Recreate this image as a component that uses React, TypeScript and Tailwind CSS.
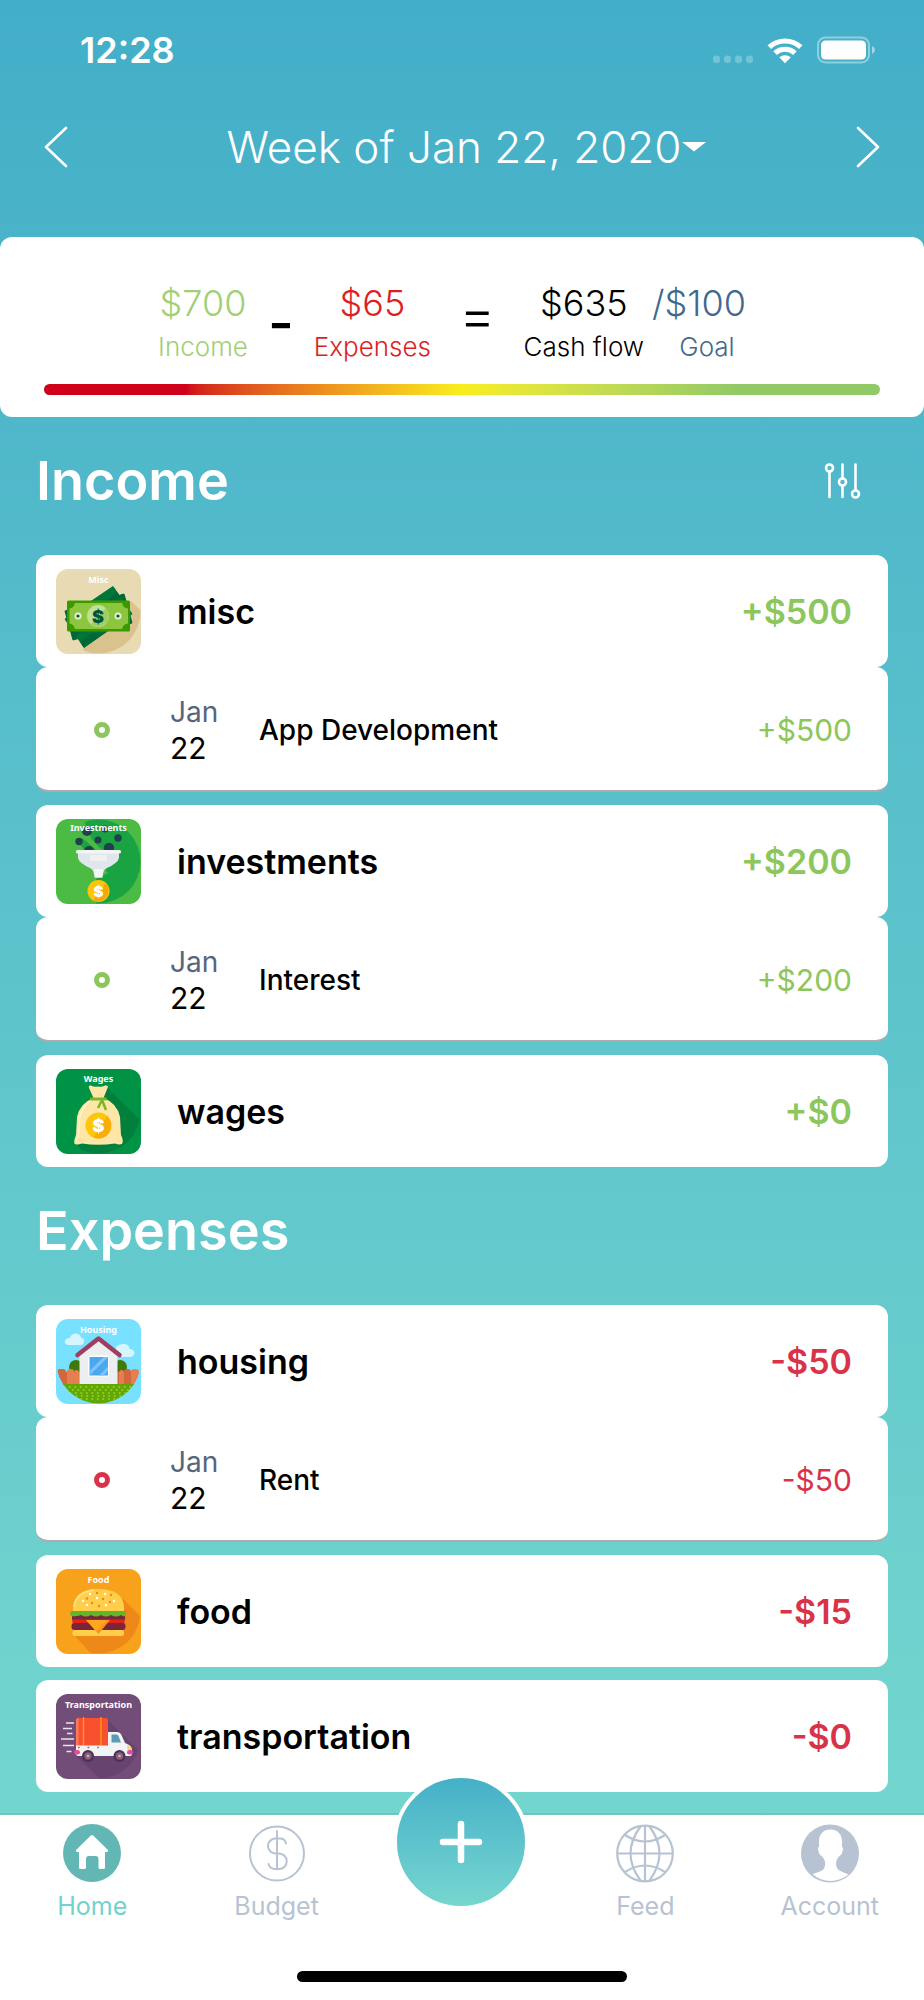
import React, { useState } from 'react';

type Entry = { id: number; month: string; day: string; title: string; amount: string };
type Category = { name: string; total: string; Icon: () => React.JSX.Element; entries: Entry[] };

const Tile = ({ label, bg, shadow, children }: {
  label: string;
  bg: string;
  shadow?: string;
  children: React.ReactNode;
}) => (
  <svg viewBox="0 0 85 85" className="size-[85px] shrink-0 rounded-xl" aria-hidden="true">
    <defs>
      <clipPath id={`disc-${label}`}>
        <circle cx="42.5" cy="42.5" r="42" />
      </clipPath>
    </defs>
    <rect width="85" height="85" fill={bg} />
    {shadow && <path d={shadow} fill="#000" fillOpacity="0.12" clipPath={`url(#disc-${label})`} />}
    {children}
  </svg>
);

const TileLabel = ({ text, y = 14 }: { text: string; y?: number }) => (
  <text x="42.5" y={y} textAnchor="middle" fill="#fff" fontSize="9" fontWeight="700" fontFamily="'Noto Sans', sans-serif">
    {text}
  </text>
);

const MiscIcon = () => (
  <Tile label="Misc" bg="#e8dab3">
    <path d="M75 32 L90 47 V90 H30 L26 75 Z" fill="#dac28e" clipPath="url(#disc-Misc)" />
    <path d="M68 25 L76 54 L17 71 L9 42 Z" fill="#006837" stroke="#006837" strokeWidth="1" strokeLinejoin="round" />
    <path d="M57 17.500 L76 45 L28 78.500 L9 50 Z" fill="#00753a" stroke="#00753a" strokeWidth="1" strokeLinejoin="round" />
    <path d="M61 23 L65 29 L20 67 L16 61 Z" fill="#006837" />
    <path d="M24 72.500 L28 78.500 L48 64 H36 Z" fill="#006837" />
    <rect x="11" y="31.500" width="63" height="31" rx="1.5" fill="#3a9b00" />
    <path d="M19 34 H66 Q67 39 72 39.500 V54.500 Q67 55 66 60 H19 Q18 55 13.500 54.500 V39.500 Q18 39 19 34 Z" fill="#8cc63f" />
    <circle cx="42" cy="47" r="11" fill="#c0df98" />
    <path d="M35 55 L50 39 A11 11 0 0 1 35 55 Z" fill="#9fcf60" />
    <circle cx="22" cy="47" r="3.500" fill="#e3f1cf" />
    <circle cx="22" cy="47" r="1.600" fill="#00563a" />
    <circle cx="62" cy="47" r="3.500" fill="#e3f1cf" />
    <circle cx="62" cy="47" r="1.600" fill="#00563a" />
    <text x="42" y="53.500" textAnchor="middle" fontSize="18" fontWeight="900" fontFamily="Inter, sans-serif" fill="#00563a">$</text>
    <TileLabel text="Misc" />
  </Tile>
);

const InvestmentsIcon = () => (
  <Tile label="Investments" bg="#4cbb43">
    <path d="M20 22 L52 54 L40 60 V85 H85 V0 H27 L40 30 L26 19 Z" fill="#1aa342" clipPath="url(#disc-Investments)" />
    <path d="M27 18 L40 31 H46 L29 14 Z" fill="#4cbb43" />
    <g fill="#20404d">
      <circle cx="31" cy="12" r="5" />
      <circle cx="49" cy="10" r="3.500" />
      <circle cx="23" cy="22.500" r="3.700" />
      <circle cx="42" cy="21" r="3.500" />
      <circle cx="62" cy="19" r="3.700" />
      <circle cx="53" cy="29" r="5.200" />
      <circle cx="33" cy="32" r="5" />
    </g>
    <path d="M22 33 H63 V39 Q62 44 51 49 Q48 50.500 47.500 53 L46.500 58.500 H38.500 L37.500 53 Q37 50.500 34 49 Q23 44 22 39 Z" fill="#dfe7ec" />
    <path d="M34 36 H51 V42 H34 Z" fill="#f0f0f0" />
    <path d="M38 50 H47 L46 58.500 H39 Z" fill="#f4f5f6" />
    <rect x="20" y="31" width="45" height="3.500" rx="1.500" fill="#f3f5f7" />
    <circle cx="42.500" cy="72" r="11" fill="#fdc60b" />
    <path d="M50 64.500 A11 11 0 0 1 37 81.500 Z" fill="#f5a70a" />
    <text x="42.500" y="77.500" textAnchor="middle" fontSize="15" fontWeight="900" fontFamily="Inter, sans-serif" fill="#fff">$</text>
    <TileLabel text="Investments" y={12} />
  </Tile>
);

const WagesIcon = () => (
  <Tile label="Wages" bg="#009245" shadow="M50 17 L90 57 V90 H32 L20 74 Z">
    <path d="M33 19 Q32 16 35 16.500 Q38 18.500 42 17.500 Q46 18.500 49 16.500 Q53 16 51.500 19 L47.500 29 Q61 34 64 48 L65 66 Q68 72 66 75 Q63 76 59 74.500 Q42 77 26 74.500 Q21 76 18.500 75 Q17.500 72 20 66 L21 48 Q24 34 37.500 29 Z" fill="#fee6a6" />
    <path d="M33 33 Q25 40 23.500 50 L22.500 69" fill="none" stroke="#fff2cc" strokeWidth="1.500" />
    <path d="M34 30 H50.500" stroke="#7db526" strokeWidth="3" />
    <path d="M46 31 L42 39 M46 31 L50 41" stroke="#7db526" strokeWidth="2.500" fill="none" />
    <circle cx="42.500" cy="56.500" r="13" fill="#fdc60b" />
    <path d="M51 47 A13 13 0 0 1 37 68.500 Z" fill="#f9ad08" />
    <text x="42.500" y="63" textAnchor="middle" fontSize="18" fontWeight="900" fontFamily="Inter, sans-serif" fill="#fff">$</text>
    <TileLabel text="Wages" y={13} />
  </Tile>
);

const HousingIcon = () => (
  <Tile label="Housing" bg="#78e1ff">
    <g fill="#d5f5ff">
      <path d="M12 26 Q8 25 9 21.500 Q10 18.500 14 19 Q15 14.500 20 14.500 Q24 15 25 18.500 Q28 19 28 22 Q28 26 24 26 Z" />
      <path d="M60 38 V28 Q63 24.500 69 25 Q73 26 73.500 30 Q78 30 78.500 34 Q78 38 74 38 Z" />
    </g>
    <g clipPath="url(#disc-Housing)">
      <circle cx="20" cy="48" r="7" fill="#3f7a08" />
      <circle cx="64" cy="48" r="7" fill="#3f7a08" />
      <rect x="0" y="53" width="85" height="13" fill="#d1683d" />
      <g fill="#e57f4f">
        <rect x="11" y="50" width="7" height="16" rx="3" />
        <rect x="18" y="51" width="5" height="15" rx="2.500" />
        <rect x="63" y="51" width="5" height="15" rx="2.500" />
        <rect x="75" y="50" width="8" height="16" rx="3" />
      </g>
      <g fill="#d1683d">
        <rect x="1" y="50" width="9" height="16" rx="3" />
        <rect x="68" y="50" width="7" height="16" rx="3" />
      </g>
      <rect x="0" y="65" width="85" height="20" fill="#62a804" />
      <g stroke="#a6d92f" strokeWidth="1.500" strokeLinecap="round" strokeDasharray="0.500 5">
        <path d="M8 68 H80" />
        <path d="M11 71 H78" />
        <path d="M14 74 H74" />
        <path d="M20 77 H68" />
        <path d="M25 80 H62" />
      </g>
    </g>
    <path d="M23.500 36 L42.500 21 L61.500 36 V65 H23.500 Z" fill="#eceff0" />
    <path d="M21.500 36 L42.500 19.500 L63.500 36" fill="none" stroke="#9f3e63" strokeWidth="4.500" strokeLinecap="round" strokeLinejoin="round" />
    <rect x="32" y="36.500" width="21" height="21" rx="1.500" fill="#fff" />
    <rect x="33.500" y="38" width="18.500" height="18.500" fill="#4aa8f0" />
    <path d="M33.500 52 L47.500 38 H52 L33.500 56.500 Z M43 56.500 L52 47.500 V52 L47.500 56.500 Z" fill="#7cc4ff" />
    <TileLabel text="Housing" />
  </Tile>
);

const FoodIcon = () => (
  <Tile label="Food" bg="#f8a11b">
    <path d="M67 30 L90 53 V90 H40 L17 65 Z" fill="#ee8819" clipPath="url(#disc-Food)" />
    <path d="M17 42 Q17 20 42 20 Q67 20 68 38 V42 Z" fill="#ffcf4b" />
    <path d="M18 38 Q20 23 38 21" stroke="#ffe07f" strokeWidth="2" fill="none" />
    <g fill="#e8872b">
      <circle cx="41" cy="24" r="1.200" /><circle cx="55" cy="26" r="1.200" /><circle cx="31" cy="29.500" r="1.200" />
      <circle cx="47" cy="30" r="1.200" /><circle cx="36" cy="34" r="1.200" /><circle cx="54" cy="33" r="1.200" />
      <circle cx="43" cy="37" r="1.200" />
    </g>
    <g fill="#fff">
      <circle cx="34" cy="25" r="1.200" /><circle cx="49" cy="25" r="1.200" /><circle cx="27" cy="32" r="1.200" />
      <circle cx="41" cy="29" r="1.200" /><circle cx="58" cy="32" r="1.200" /><circle cx="50" cy="36" r="1.200" />
      <circle cx="31" cy="36" r="1.200" />
    </g>
    <rect x="16" y="45" width="53" height="7" rx="2" fill="#7b2638" />
    <rect x="16.500" y="50.500" width="52" height="4" fill="#e2231a" />
    <rect x="15.500" y="54" width="54" height="7" rx="3" fill="#7b2638" />
    <path d="M16 42 H69 Q71 44 69.500 47 Q67 48 65 46 Q60 49 55 46 Q50 49 45 46 Q40 49 35 46 Q30 49 25 46 Q20 48 15 47 Q13 44 16 42 Z" fill="#62b52c" />
    <rect x="16.500" y="61" width="51.500" height="6" rx="2.500" fill="#ffcf4b" />
    <path d="M30 51 H54 L42.500 65 Z" fill="#f7931e" />
    <path d="M30 51 H51 L40.500 62.500 Z" fill="#ffa71f" />
    <TileLabel text="Food" />
  </Tile>
);

const TransportationIcon = () => (
  <Tile label="Transportation" bg="#714d78">
    <path d="M52 26 L90 64 V90 H50 L20 62 Z" fill="#674370" clipPath="url(#disc-Transportation)" />
    <g stroke="#e9e3ec" strokeWidth="1.300">
      <path d="M10 29 H18 M7 34.500 H16 M11 39.500 H16.500 M5 45 H18 M7 51.500 H18 M10.500 57.500 H15.500" />
    </g>
    <rect x="20" y="24" width="32" height="28" rx="2.500" fill="#f9502f" />
    <path d="M20 26.500 Q20 24 22.500 24 V52 H20 Z" fill="#ff7a5c" />
    <path d="M27.500 23 V54 M45 23 V54" stroke="#f9a01b" strokeWidth="1.300" />
    <path d="M20 51.500 H52 V38 H61 Q64 38 65.500 41 L69 49 Q75.500 51 76 56 V60 Q76 62 74 62 H22 Q20 62 20 60 Z" fill="#f1f4f5" />
    <path d="M55.500 40.500 H60.500 Q62 40.500 62.500 42 L65 48.500 H55.500 Z" fill="#5d9ab6" />
    <path d="M22 53.500 H50" stroke="#c14a60" strokeWidth="1.600" strokeDasharray="1.600 8" />
    <rect x="18" y="56" width="6" height="4.500" rx="2.200" fill="#e0509a" />
    <rect x="71" y="56" width="6" height="4.500" rx="2.200" fill="#e0509a" />
    <path d="M71 50 L75 52.500 L76 56 H71.500 Z" fill="#f4d58a" />
    <g>
      <circle cx="32" cy="62" r="6" fill="#4b3155" /><circle cx="32" cy="62" r="3.700" fill="#8a6078" /><circle cx="32" cy="62" r="1.300" fill="#d0b0bb" />
      <circle cx="63.500" cy="62" r="6" fill="#4b3155" /><circle cx="63.500" cy="62" r="3.700" fill="#8a6078" /><circle cx="63.500" cy="62" r="1.300" fill="#d0b0bb" />
    </g>
    <TileLabel text="Transportation" />
  </Tile>
);

const income: Category[] = [
  {
    name: 'misc',
    total: '+$500',
    Icon: MiscIcon,
    entries: [{ id: 1, month: 'Jan', day: '22', title: 'App Development', amount: '+$500' }],
  },
  {
    name: 'investments',
    total: '+$200',
    Icon: InvestmentsIcon,
    entries: [{ id: 2, month: 'Jan', day: '22', title: 'Interest', amount: '+$200' }],
  },
  { name: 'wages', total: '+$0', Icon: WagesIcon, entries: [] },
];

const expenses: Category[] = [
  {
    name: 'housing',
    total: '-$50',
    Icon: HousingIcon,
    entries: [{ id: 3, month: 'Jan', day: '22', title: 'Rent', amount: '-$50' }],
  },
  { name: 'food', total: '-$15', Icon: FoodIcon, entries: [] },
  { name: 'transportation', total: '-$0', Icon: TransportationIcon, entries: [] },
];

const StatusBar = () => (
  <div className="flex h-[100px] items-center justify-between pl-20 pr-12 text-white">
    <span className="text-4xl font-semibold">12:28</span>
    <svg viewBox="0 0 166 28" className="h-7 w-[166px]" fill="#fff" aria-hidden="true">
      <g fillOpacity="0.25">
        <rect x="3" y="19.500" width="7" height="7.500" rx="3" />
        <rect x="14" y="19.500" width="7" height="7.500" rx="3" />
        <rect x="25" y="19.500" width="7" height="7.500" rx="3" />
        <rect x="36" y="19.500" width="7" height="7.500" rx="3" />
      </g>
      <path d="M57.500 9.300 A26 26 0 0 1 92.500 9.300 L89 12.900 A21 21 0 0 0 61 12.900 Z" />
      <path d="M63.300 15.300 A17.500 17.500 0 0 1 86.700 15.300 L83.200 18.900 A12.500 12.500 0 0 0 66.800 18.900 Z" />
      <path d="M69.200 21.300 A9 9 0 0 1 80.800 21.300 L75 27.300 Z" />
      <rect x="108" y="1.500" width="51" height="25" rx="7.500" fill="none" stroke="#fff" strokeOpacity="0.4" strokeWidth="2" />
      <rect x="111" y="4.500" width="45" height="19" rx="4.500" />
      <path d="M162 10 Q165 11.500 165 14 Q165 16.500 162 18 Z" fillOpacity="0.5" />
    </svg>
  </div>
);

const WeekPicker = () => (
  <header className="flex h-[137px] items-start justify-between px-11 pt-5 text-white">
    <button type="button" aria-label="Previous week" className="flex h-[54px] items-center">
      <svg viewBox="0 0 24 42" className="h-[42px] w-6" fill="none" stroke="currentColor" strokeWidth="2.600" strokeLinecap="round" strokeLinejoin="round">
        <path d="M22 2 L2 21 L22 40" />
      </svg>
    </button>
    <button type="button" className="flex h-[54px] items-center pl-2 text-[44px] font-light">
      Week of Jan 22, 2020
      <svg viewBox="0 0 24 10" className="h-2.5 w-6" fill="currentColor" aria-hidden="true">
        <path d="M0 0 H24 L12 9.500 Z" />
      </svg>
    </button>
    <button type="button" aria-label="Next week" className="flex h-[54px] items-center">
      <svg viewBox="0 0 24 42" className="h-[42px] w-6" fill="none" stroke="currentColor" strokeWidth="2.600" strokeLinecap="round" strokeLinejoin="round">
        <path d="M2 2 L22 21 L2 40" />
      </svg>
    </button>
  </header>
);

const Summary = () => (
  <section aria-label="Cash flow" className="rounded-xl bg-white px-11 pt-11 pb-[22px]">
    <div className="flex justify-center pr-5 text-center text-[26px] leading-[44px] font-light">
      <div className="text-[#9fd074]">
        <p className="text-4xl leading-[44px]">$700</p>
        <p>Income</p>
      </div>
      <span className="px-5 pt-5 text-[56px] leading-[44px] font-medium">-</span>
      <div className="text-[#dd1e25]">
        <p className="text-4xl leading-[44px]">$65</p>
        <p>Expenses</p>
      </div>
      <span className="px-7 pt-3 text-[56px] leading-[44px]">=</span>
      <div className="text-black">
        <p className="text-4xl leading-[44px]">$635</p>
        <p>Cash flow</p>
      </div>
      <div className="pl-2 text-[#43688e]">
        <p className="text-4xl leading-[44px]">/$100</p>
        <p className="pl-4">Goal</p>
      </div>
    </div>
    <div className="mt-[15px] h-[11px] rounded-full bg-linear-to-r from-[#d0021b] from-17% via-[#f8ee1c] via-50% to-[#91c966] to-83%" />
  </section>
);

const CategoryCard = ({ category, positive }: { category: Category; positive: boolean }) => {
  const { name, total, Icon, entries } = category;
  const color = positive ? 'text-[#8cc65c]' : 'text-[#d93349]';

  return (
    <li>
      <div className="flex h-28 items-center rounded-xl bg-white pl-5 pr-9 text-[34px] font-semibold">
        <Icon />
        <h3 className="pl-9 text-black">{name}</h3>
        <span className={`ml-auto ${color}`}>{total}</span>
      </div>
      {entries.map((entry) => (
        <div
          key={entry.id}
          className="flex h-[125px] items-center rounded-xl border-b-2 border-[#b0abab] bg-white pt-0.5 pl-[58px] pr-9 text-[30px] leading-9"
        >
          <span className={`size-4 rounded-full border-[5px] border-current ${color}`} />
          <div className="w-[149px] pl-[60px] text-black">
            <p className="text-[28px] leading-9 text-[#56657b]">{entry.month}</p>
            <p>{entry.day}</p>
          </div>
          <p className="text-[28px] leading-9 font-medium text-black">{entry.title}</p>
          <span className={`ml-auto ${color}`}>{entry.amount}</span>
        </div>
      ))}
    </li>
  );
};

const Section = ({ title, categories, positive, action }: {
  title: string;
  categories: Category[];
  positive: boolean;
  action?: React.ReactNode;
}) => (
  <section className="px-9">
    <div className="flex h-[138px] items-start justify-between pr-[26px] pt-8 text-white">
      <h2 className="text-[54px] leading-[64px] font-semibold">{title}</h2>
      {action}
    </div>
    <ul className="flex flex-col gap-[13px]">
      {categories.map((category) => (
        <CategoryCard key={category.name} category={category} positive={positive} />
      ))}
    </ul>
  </section>
);

const FilterButton = () => (
  <button type="button" aria-label="Filter" className="flex h-16 items-center">
    <svg viewBox="0 0 40 40" className="size-10" fill="none" stroke="currentColor" strokeWidth="2.600" strokeLinecap="round">
      <circle cx="7.500" cy="7" r="3.500" />
      <path d="M7.500 10.500 V36" />
      <circle cx="20.500" cy="21" r="3.500" />
      <path d="M20.500 3.500 V17.500 M20.500 24.500 V36" />
      <circle cx="33.500" cy="33" r="3.500" />
      <path d="M33.500 3.500 V29.500" />
    </svg>
  </button>
);

const HomeIcon = () => (
  <svg viewBox="0 0 60 60" className="size-[60px]" aria-hidden="true">
    <circle cx="30" cy="30" r="29" fill="#62b7b4" />
    <path d="M28.800 12.500 Q30 11.300 31.200 12.500 L45.500 26.500 Q47 28.700 44.500 29 H43 V44.500 Q43 46 41.500 46 H38 Q36.500 46 36.500 44.500 V36 Q36.500 33 33.500 33 H27 Q24 33 24 36 V44.500 Q24 46 22.500 46 H18.500 Q17 46 17 44.500 V29 H15.500 Q13 28.700 14.500 26.500 Z" fill="#fff" />
  </svg>
);

const BudgetIcon = () => (
  <svg viewBox="0 0 60 60" className="size-[60px]" fill="none" stroke="currentColor" strokeWidth="2" strokeLinecap="round" aria-hidden="true">
    <circle cx="30" cy="30.500" r="27" />
    <path d="M30 8 V46" />
    <path d="M39 20.500 Q38 15.500 33 15.500 H28.500 A7.500 7.500 0 0 0 28.500 30.500 H32 A7.500 7.500 0 0 1 32 46 H28 Q23 46 21.500 41" />
  </svg>
);

const FeedIcon = () => (
  <svg viewBox="0 0 60 60" className="size-[60px]" fill="none" stroke="currentColor" strokeWidth="2.200" aria-hidden="true">
    <circle cx="30" cy="30.500" r="27.800" />
    <path d="M30 2.500 V58.500 M2 30.500 H58" />
    <path d="M25.500 3.500 Q5.500 30.500 25.500 57.500 M34.500 3.500 Q54.500 30.500 34.500 57.500" />
    <path d="M10 12 Q30 25 50 12 M10 49 Q30 36 50 49" />
  </svg>
);

const AccountIcon = () => (
  <svg viewBox="0 0 60 60" className="size-[60px]" aria-hidden="true">
    <circle cx="30" cy="30.500" r="29" fill="currentColor" />
    <path d="M30.500 6.500 C37.500 6.500 41.800 11 42 18 V24 Q43.500 24 42.800 27 Q42 31.500 40 32.500 C35.500 36.500 35.500 41 37 45 Q38 47.500 42 48.800 L48.500 51.500 Q40.500 58 30.500 58 Q20 58 12.500 51 L20 48.500 Q23.500 47.500 24.500 44.500 C25.800 40.500 25.500 36.500 21 32.500 Q19 31.500 18.200 27 Q17.500 24 19 24 V18 C19.200 11 23.500 6.500 30.500 6.500 Z" fill="#fff" />
  </svg>
);

const tabs = [
  { label: 'Home', Icon: HomeIcon },
  { label: 'Budget', Icon: BudgetIcon },
  { label: 'Feed', Icon: FeedIcon },
  { label: 'Account', Icon: AccountIcon },
];

const TabBar = () => {
  const [active, setActive] = useState('Home');

  const renderTab = ({ label, Icon }: (typeof tabs)[number]) => (
    <button
      key={label}
      type="button"
      onClick={() => setActive(label)}
      className={`flex flex-col items-center pt-2 text-[25px] leading-[46px] ${
        active === label ? 'text-[#6fd3ce]' : 'text-[#b7c3d3]'
      }`}
    >
      <Icon />
      {label}
    </button>
  );

  return (
    <nav className="sticky bottom-0 mt-auto border-t-2 border-[#74c3bc] bg-white pb-[18px]">
      <div className="grid h-[156px] grid-cols-5 items-start pr-0.5">
        {tabs.slice(0, 2).map(renderTab)}
        <button
          type="button"
          aria-label="Add transaction"
          className="-mt-[41px] flex size-[136px] items-center justify-center justify-self-center rounded-full border-4 border-white bg-linear-to-b from-[#44b0c8] to-[#76d6cf]"
        >
          <svg viewBox="0 0 44 44" className="size-11" stroke="#fff" strokeWidth="6.500" strokeLinecap="round">
            <path d="M22 4 V40 M4 22 H40" />
          </svg>
        </button>
        {tabs.slice(2).map(renderTab)}
      </div>
      <div className="mx-auto h-[11px] w-[330px] rounded-full bg-black" />
    </nav>
  );
};

const App = () => {
  return (
    <div className="flex min-h-screen flex-col bg-linear-to-b from-[#43aec8] to-[#73d6ce] to-91% font-[Inter,'Liberation_Sans',sans-serif]">
      <StatusBar />
      <WeekPicker />
      <main className="pb-[21px]">
        <Summary />
        <Section title="Income" categories={income} positive action={<FilterButton />} />
        <Section title="Expenses" categories={expenses} positive={false} />
      </main>
      <TabBar />
    </div>
  );
};

export default App;
